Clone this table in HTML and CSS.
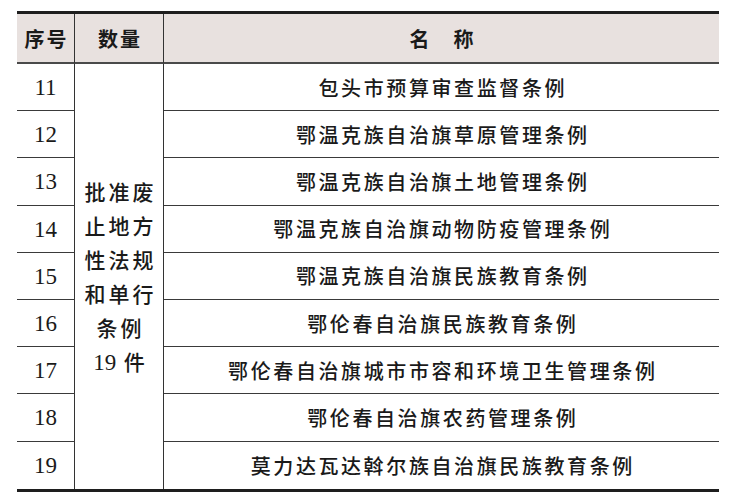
FILE: index.html
```html
<!DOCTYPE html>
<html lang="zh">
<head>
<meta charset="utf-8">
<link rel="stylesheet" href="styles.css">
</head>
<body>
<div class="sheet">
  <div class="head c1">序号</div>
  <div class="head c2">数量</div>
  <div class="head c3">名　称</div>

  <div class="num r1">11</div>
  <div class="merged">
    <div class="mline">批准废</div>
    <div class="mline">止地方</div>
    <div class="mline">性法规</div>
    <div class="mline">和单行</div>
    <div class="mline">条例</div>
    <div class="mline"><span class="digits">19</span> 件</div>
  </div>
  <div class="name r1">包头市预算审查监督条例</div>

  <div class="num">12</div>
  <div class="name">鄂温克族自治旗草原管理条例</div>

  <div class="num">13</div>
  <div class="name">鄂温克族自治旗土地管理条例</div>

  <div class="num">14</div>
  <div class="name">鄂温克族自治旗动物防疫管理条例</div>

  <div class="num">15</div>
  <div class="name">鄂温克族自治旗民族教育条例</div>

  <div class="num">16</div>
  <div class="name">鄂伦春自治旗民族教育条例</div>

  <div class="num">17</div>
  <div class="name">鄂伦春自治旗城市市容和环境卫生管理条例</div>

  <div class="num">18</div>
  <div class="name">鄂伦春自治旗农药管理条例</div>

  <div class="num last">19</div>
  <div class="name last">莫力达瓦达斡尔族自治旗民族教育条例</div>
</div>
</body>
</html>
```

FILE: styles.css
```css
html, body {
  margin: 0;
  padding: 0;
  background: #ffffff;
}

body {
  font-family: "Noto Sans CJK SC", "Noto Sans", sans-serif;
  color: #1a1a1a;
}

.sheet {
  margin: 11px 0 0 17px;
  width: 702px;
  display: grid;
  grid-template-columns: 58px 89px 1fr;
  grid-template-rows: 50px repeat(9, 47.2px);
  border-top: 3px solid #1e1e1e;
  border-bottom: 3px solid #1e1e1e;
  box-sizing: content-box;
}

.head {
  background: #e8e1df;
  border-bottom: 2px solid #4a4a4a;
  display: flex;
  align-items: center;
  justify-content: center;
  font-size: 20px;
  font-weight: 700;
  letter-spacing: 2px;
  padding-left: 2px;
  box-sizing: border-box;
}

.c1, .c2 {
  border-right: 1.5px solid #333;
}

.num {
  grid-column: 1;
  border-right: 1.5px solid #333;
  border-bottom: 1.5px solid #3a3a3a;
  display: flex;
  align-items: center;
  justify-content: center;
  font-family: "Liberation Serif", "Times New Roman", serif;
  font-size: 23px;
  box-sizing: border-box;
  padding-top: 2px;
}

.name {
  grid-column: 3;
  border-bottom: 1.5px solid #3a3a3a;
  display: flex;
  align-items: center;
  justify-content: center;
  font-size: 20px;
  font-weight: 500;
  letter-spacing: 2.6px;
  padding-left: 2.6px;
  box-sizing: border-box;
}

.last {
  border-bottom: none;
}

.merged {
  grid-column: 2;
  grid-row: 2 / span 9;
  border-right: 1.5px solid #333;
  display: flex;
  flex-direction: column;
  align-items: center;
  justify-content: center;
  font-size: 21px;
  font-weight: 500;
  letter-spacing: 3px;
  padding-left: 3px;
  box-sizing: border-box;
}

.mline {
  line-height: 34px;
  height: 34px;
}

.digits {
  font-family: "Liberation Serif", "Times New Roman", serif;
  font-size: 23px;
  letter-spacing: 0;
}
```
